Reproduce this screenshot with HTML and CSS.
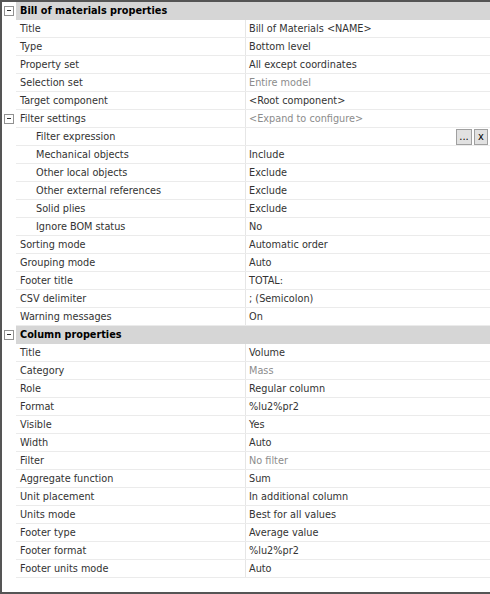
FILE: index.html
```html
<!DOCTYPE html>
<html>
<head>
<meta charset="utf-8">
<link rel="stylesheet" href="styles.css">
</head>
<body>
<div class="frame">
  <div class="row hdr"><div class="gutter"><span class="exp"></span></div><div class="cells"><div class="label">Bill of materials properties</div></div></div>
  <div class="row"><div class="gutter"></div><div class="cells"><div class="label">Title</div><div class="value">Bill of Materials &lt;NAME&gt;</div></div></div>
  <div class="row"><div class="gutter"></div><div class="cells"><div class="label">Type</div><div class="value">Bottom level</div></div></div>
  <div class="row"><div class="gutter"></div><div class="cells"><div class="label">Property set</div><div class="value">All except coordinates</div></div></div>
  <div class="row"><div class="gutter"></div><div class="cells"><div class="label">Selection set</div><div class="value dim">Entire model</div></div></div>
  <div class="row"><div class="gutter"></div><div class="cells"><div class="label">Target component</div><div class="value">&lt;Root component&gt;</div></div></div>
  <div class="row"><div class="gutter"><span class="exp"></span></div><div class="cells"><div class="label">Filter settings</div><div class="value dim">&lt;Expand to configure&gt;</div></div></div>
  <div class="row"><div class="gutter"></div><div class="cells"><div class="label sub">Filter expression</div><div class="value"><span class="btns"><span class="btn wide">...</span><span class="btn">x</span></span></div></div></div>
  <div class="row"><div class="gutter"></div><div class="cells"><div class="label sub">Mechanical objects</div><div class="value">Include</div></div></div>
  <div class="row"><div class="gutter"></div><div class="cells"><div class="label sub">Other local objects</div><div class="value">Exclude</div></div></div>
  <div class="row"><div class="gutter"></div><div class="cells"><div class="label sub">Other external references</div><div class="value">Exclude</div></div></div>
  <div class="row"><div class="gutter"></div><div class="cells"><div class="label sub">Solid plies</div><div class="value">Exclude</div></div></div>
  <div class="row"><div class="gutter"></div><div class="cells"><div class="label sub">Ignore BOM status</div><div class="value">No</div></div></div>
  <div class="row"><div class="gutter"></div><div class="cells"><div class="label">Sorting mode</div><div class="value">Automatic order</div></div></div>
  <div class="row"><div class="gutter"></div><div class="cells"><div class="label">Grouping mode</div><div class="value">Auto</div></div></div>
  <div class="row"><div class="gutter"></div><div class="cells"><div class="label">Footer title</div><div class="value">TOTAL:</div></div></div>
  <div class="row"><div class="gutter"></div><div class="cells"><div class="label">CSV delimiter</div><div class="value">; (Semicolon)</div></div></div>
  <div class="row"><div class="gutter"></div><div class="cells"><div class="label">Warning messages</div><div class="value">On</div></div></div>
  <div class="row hdr"><div class="gutter"><span class="exp"></span></div><div class="cells"><div class="label">Column properties</div></div></div>
  <div class="row"><div class="gutter"></div><div class="cells"><div class="label">Title</div><div class="value">Volume</div></div></div>
  <div class="row"><div class="gutter"></div><div class="cells"><div class="label">Category</div><div class="value dim">Mass</div></div></div>
  <div class="row"><div class="gutter"></div><div class="cells"><div class="label">Role</div><div class="value">Regular column</div></div></div>
  <div class="row"><div class="gutter"></div><div class="cells"><div class="label">Format</div><div class="value">%lu2%pr2</div></div></div>
  <div class="row"><div class="gutter"></div><div class="cells"><div class="label">Visible</div><div class="value">Yes</div></div></div>
  <div class="row"><div class="gutter"></div><div class="cells"><div class="label">Width</div><div class="value">Auto</div></div></div>
  <div class="row"><div class="gutter"></div><div class="cells"><div class="label">Filter</div><div class="value dim">No filter</div></div></div>
  <div class="row"><div class="gutter"></div><div class="cells"><div class="label">Aggregate function</div><div class="value">Sum</div></div></div>
  <div class="row"><div class="gutter"></div><div class="cells"><div class="label">Unit placement</div><div class="value">In additional column</div></div></div>
  <div class="row"><div class="gutter"></div><div class="cells"><div class="label">Units mode</div><div class="value">Best for all values</div></div></div>
  <div class="row"><div class="gutter"></div><div class="cells"><div class="label">Footer type</div><div class="value">Average value</div></div></div>
  <div class="row"><div class="gutter"></div><div class="cells"><div class="label">Footer format</div><div class="value">%lu2%pr2</div></div></div>
  <div class="row"><div class="gutter"></div><div class="cells"><div class="label">Footer units mode</div><div class="value">Auto</div></div></div>
</div>
</body>
</html>
```
FILE: styles.css
```css
html, body {
  margin: 0;
  padding: 0;
  background: #ffffff;
}
.frame {
  width: 490px;
  height: 594px;
  box-sizing: border-box;
  border-top: 2px solid #555555;
  border-left: 2px solid #555555;
  border-bottom: 2px solid #555555;
  font-family: "DejaVu Sans Condensed", "DejaVu Sans", "Liberation Sans", sans-serif;
  font-size: 10.8px;
  color: #333333;
  background: #ffffff;
}
.row {
  display: flex;
  height: 18px;
}
.gutter {
  width: 14px;
  flex: none;
  display: flex;
  align-items: center;
  justify-content: center;
}
.exp {
  width: 8px;
  height: 8px;
  border: 1px solid #919191;
  background: #ffffff;
  position: relative;
  margin-left: -1px;
}
.exp::after {
  content: "";
  position: absolute;
  left: 2px;
  top: 3px;
  width: 4px;
  height: 1px;
  background: #333333;
}
.cells {
  flex: 1;
  display: flex;
  box-sizing: border-box;
  height: 18px;
  border-bottom: 1px solid #ebebeb;
  line-height: 18px;
}
.label {
  width: 229px;
  flex: none;
  box-sizing: border-box;
  padding-left: 4px;
  white-space: nowrap;
}
.label.sub {
  padding-left: 20px;
}
.value {
  flex: 1;
  display: flex;
  border-left: 1px solid #e6e6e6;
  padding-left: 3px;
  white-space: nowrap;
}
.dim {
  color: #8c8c8c;
}
.hdr .cells {
  background: #d6d6d6;
  border-bottom: none;
  font-weight: bold;
  color: #000000;
}
.btns {
  margin-left: auto;
  display: flex;
  gap: 2px;
  padding-top: 1px;
  padding-right: 2px;
}
.btn {
  width: 14px;
  height: 16px;
  box-sizing: border-box;
  border: 1px solid #a0a0a0;
  background: #e1e1e1;
  color: #000000;
  font-size: 11px;
  line-height: 13px;
  text-align: center;
}
.btn.wide {
  width: 16px;
}
```
